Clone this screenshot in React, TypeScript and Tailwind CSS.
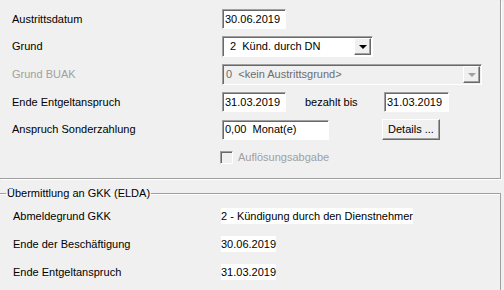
import { ReactNode } from "react"

const sunken =
  "border border-t-[#a0a0a0] border-l-[#a0a0a0] border-b-white border-r-white shadow-[inset_1px_1px_0_#696969]"
const raised =
  "border border-t-white border-l-white border-b-[#696969] border-r-[#696969] shadow-[inset_-1px_-1px_0_#a0a0a0]"

function Field({ value, width }: { value: string; width: string }) {
  return (
    <div className={`${sunken} ${width} h-[20px] bg-white flex items-center pl-[2px] leading-none`}>
      {value}
    </div>
  )
}

function Arrow({ disabled }: { disabled?: boolean }) {
  return (
    <div className={`${raised} w-[17px] h-[17px] bg-[#f0f0f0] flex items-center justify-center`}>
      <div
        className={`w-0 h-0 border-l-[4px] border-r-[4px] border-t-[4px] border-l-transparent border-r-transparent ${
          disabled ? "border-t-[#a0a0a0]" : "border-t-black"
        }`}
      />
    </div>
  )
}

function Row({ label, disabled, children }: { label: string; disabled?: boolean; children: ReactNode }) {
  return (
    <>
      <div className={`flex items-center ${disabled ? "text-[#a0a0a0]" : ""}`}>{label}</div>
      <div className="flex items-center">{children}</div>
    </>
  )
}

export default function App() {
  return (
    <div
      className="w-[504px] h-[290px] overflow-hidden bg-[#f0f0f0] text-[11px] text-black"
      style={{ fontFamily: '"Liberation Sans", Arial, sans-serif' }}
    >
      {/* Austritt */}
      <div className="w-[501px] h-[179px] border-r border-b border-[#a0a0a0] shadow-[1px_1px_0_white]">
        <div className="grid grid-cols-[210px_1fr] grid-rows-[20px_21px_21px_20px_21px_20px] gap-y-[7px] pl-[12px] pt-[9px]">
          <Row label="Austrittsdatum">
            <Field value="30.06.2019" width="w-[64px]" />
          </Row>
          <Row label="Grund">
            <div className={`${sunken} w-[151px] h-[21px] bg-white flex items-center justify-between pr-[1px]`}>
              <span className="pl-[7px] whitespace-pre">2  Künd. durch DN</span>
              <Arrow />
            </div>
          </Row>
          <Row label="Grund BUAK" disabled>
            <div className={`${sunken} w-[260px] h-[21px] bg-[#f0f0f0] flex items-center justify-between pr-[1px]`}>
              <span className="pl-[3px] whitespace-pre text-[#6d6d6d]">0  &lt;kein Austrittsgrund&gt;</span>
              <Arrow disabled />
            </div>
          </Row>
          <Row label="Ende Entgeltanspruch">
            <Field value="31.03.2019" width="w-[64px]" />
            <span className="ml-[19px] w-[79px]">bezahlt bis</span>
            <Field value="31.03.2019" width="w-[65px]" />
          </Row>
          <Row label="Anspruch Sonderzahlung">
            <div className={`${sunken} w-[107px] h-[20px] bg-white flex items-center pl-[2px] whitespace-pre`}>
              0,00  Monat(e)
            </div>
            <button className={`${raised} ml-[53px] w-[58px] h-[21px] bg-[#f0f0f0] flex items-center justify-center`}>
              Details ...
            </button>
          </Row>
          <Row label="">
            <div className="flex items-center -ml-[2px] text-[#a0a0a0]">
              <div className={`${sunken} w-[13px] h-[13px] bg-[#f0f0f0]`} />
              <span className="ml-[5px]">Auflösungsabgabe</span>
            </div>
          </Row>
        </div>
      </div>

      {/* ELDA */}
      <fieldset className="mt-[8px] -ml-[2px] w-[503px] h-[120px] border border-[#a0a0a0] shadow-[inset_1px_1px_0_white]">
        <legend className="ml-[7px] px-[1px] leading-[13px]">Übermittlung an GKK (ELDA)</legend>
        <div className="grid grid-cols-[208px_1fr] auto-rows-[28px] pl-[14px] pt-[2px]">
          <div className="flex items-center">Abmeldegrund GKK</div>
          <div className="flex items-center">
            <span className="bg-white">2 - Kündigung durch den Dienstnehmer</span>
          </div>
          <div className="flex items-center">Ende der Beschäftigung</div>
          <div className="flex items-center">
            <span className="bg-white">30.06.2019</span>
          </div>
          <div className="flex items-center">Ende Entgeltanspruch</div>
          <div className="flex items-center">
            <span className="bg-white">31.03.2019</span>
          </div>
        </div>
      </fieldset>
    </div>
  )
}
